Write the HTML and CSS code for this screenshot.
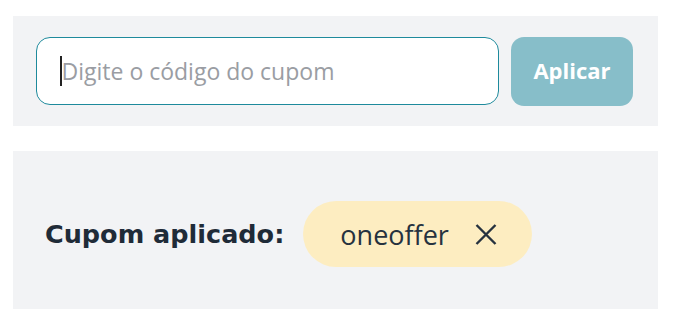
FILE: index.html
```html
<!DOCTYPE html>
<html lang="pt">
<head>
<meta charset="utf-8">
<link rel="stylesheet" href="styles.css">
</head>
<body>
<div class="page">
  <div class="panel coupon-form">
    <div class="input-box">
      <span class="caret"></span>
      <span class="placeholder">Digite o código do cupom</span>
    </div>
    <button class="apply-btn">Aplicar</button>
  </div>
  <div class="panel applied">
    <span class="label">Cupom aplicado:</span>
    <span class="pill">
      <span class="code">oneoffer</span>
      <svg class="close" width="22" height="21" viewBox="0 0 22 21"><path d="M1.5 1 L20.5 20 M20.5 1 L1.5 20" stroke="#26323f" stroke-width="2.4" fill="none"/></svg>
    </span>
  </div>
</div>
</body>
</html>
```

FILE: styles.css
```css
html, body { margin: 0; padding: 0; background: #fff; }
body { font-family: "Open Sans", "Liberation Sans", sans-serif; }
.page {
  padding: 16px 25px 0 13px;
  width: 645px;
  display: flex;
  flex-direction: column;
  gap: 25px;
}
.panel { background: #f2f3f5; box-sizing: border-box; }
.coupon-form {
  height: 110px;
  padding: 21px 25px 0 23px;
  display: flex;
  gap: 12px;
}
.input-box {
  width: 463px;
  height: 68px;
  box-sizing: border-box;
  border: 1.5px solid #1e8a9c;
  border-radius: 14px;
  background: #fff;
  display: flex;
  align-items: center;
  padding-left: 23px;
}
.caret { width: 1.5px; height: 30px; background: #222; }
.placeholder { color: #9a9da3; font-size: 23px; }
.apply-btn {
  width: 122px;
  height: 69px;
  border: none;
  border-radius: 13px;
  background: #87bec9;
  color: #fff;
  font-family: inherit;
  font-weight: 700;
  font-size: 22px;
  padding: 0 0 4px;
}
.applied {
  height: 158px;
  display: flex;
  align-items: center;
  padding: 8px 0 0 32px;
  gap: 19px;
}
.label { font-family: "DejaVu Sans", sans-serif; font-weight: 700; font-size: 25.5px; color: #1f2b38; }
.pill {
  width: 229px;
  height: 66px;
  box-sizing: border-box;
  background: #fdedc1;
  border-radius: 33px;
  display: flex;
  align-items: center;
  padding-left: 37px;
  gap: 26px;
}
.code { font-size: 27px; color: #26323f; }
.close { display: block; }
```
